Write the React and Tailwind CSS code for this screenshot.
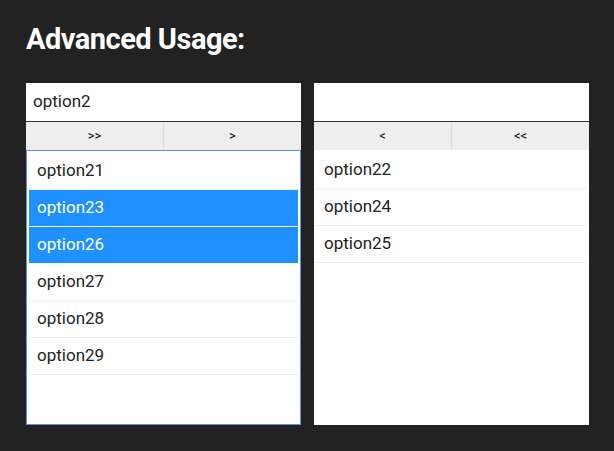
export default function App() {
  const Item = ({ t, sel }) => (
    <div className={`h-[37px] flex items-center px-[8px] text-[17px] border-b ${sel ? "bg-[#1e90ff] text-white border-white" : "text-[#222] border-[#eee]"}`}>{t}</div>
  );
  const Panel = ({ value, btns, items, focus }) => (
    <div className="w-[275px] flex flex-col">
      <div className="h-[39px] bg-white border-b border-[#333] flex items-center px-[7px] text-[17px] text-[#222]">{value}</div>
      <div className="flex h-[28px] bg-[#eee] text-[13px] text-black">
        {btns.map((b, i) => (
          <div key={i} className={`flex-1 flex items-center justify-center ${i === 0 ? "border-r border-[#ddd]" : ""}`}>{b}</div>
        ))}
      </div>
      <div className={`h-[275px] bg-white p-[2px] ${focus ? "border border-[#5b8fe0]" : ""}`}>
        {items.map((it) => <Item key={it.t} {...it} />)}
      </div>
    </div>
  );
  return (
    <div className="w-[614px] h-[451px] bg-[#222] pl-[26px] pt-[18px]" style={{ fontFamily: "Roboto, sans-serif" }}>
      <h1 className="text-white text-[29px] font-bold h-[65px] tracking-[-0.5px]">Advanced Usage:</h1>
      <div className="flex gap-[13px]">
        <Panel value="option2" btns={[">>", ">"]} focus items={[{ t: "option21" }, { t: "option23", sel: true }, { t: "option26", sel: true }, { t: "option27" }, { t: "option28" }, { t: "option29" }]} />
        <Panel value="" btns={["<", "<<"]} items={[{ t: "option22" }, { t: "option24" }, { t: "option25" }]} />
      </div>
    </div>
  );
}
